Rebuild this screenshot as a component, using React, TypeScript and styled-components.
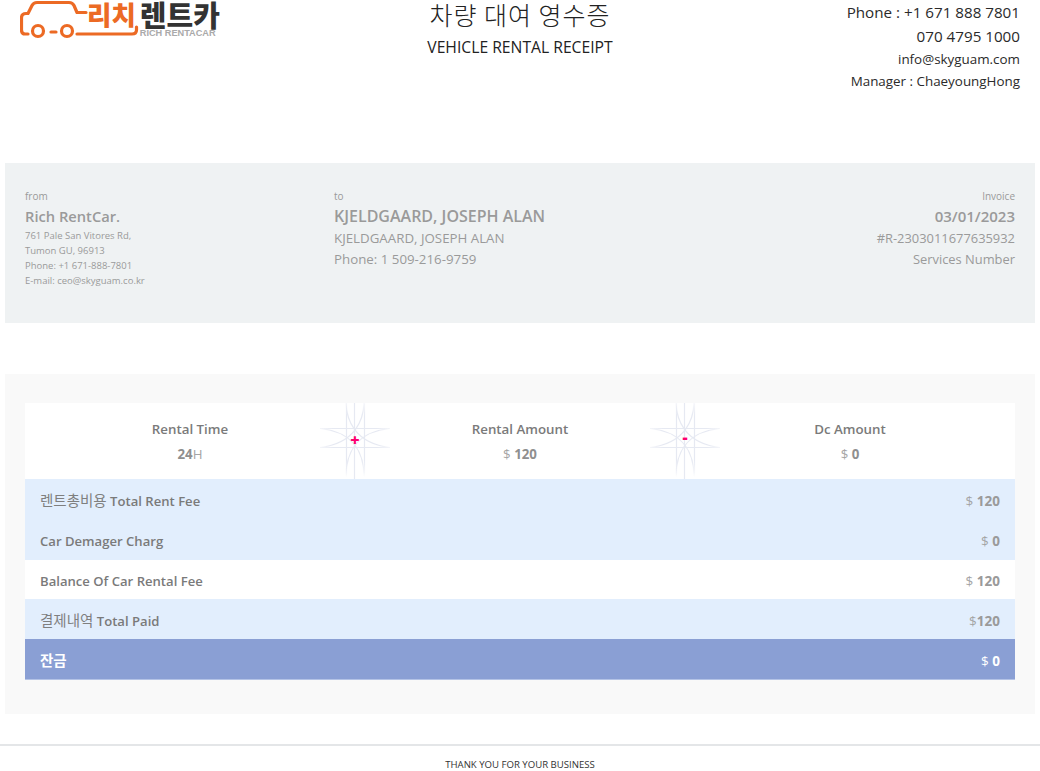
import styled, { createGlobalStyle } from "styled-components";

const Global = createGlobalStyle`
  html, body {
    margin: 0;
    background: #fff;
    font-family: "Open Sans", "Noto Sans CJK KR", sans-serif;
  }
`;

const Page = styled.div`
  width: 1040px;
  height: 771px;
  overflow: hidden;
  display: flex;
  flex-direction: column;
`;

const Header = styled.header`
  height: 163px;
  display: grid;
  grid-template-columns: 1fr 1fr 1fr;
  padding: 0 20px;
  box-sizing: border-box;
`;

const Logo = styled.div`
  display: flex;
  align-items: flex-start;
  height: 40px;
`;

const LogoRed = styled.span`
  font-size: 26.500px;
  font-weight: 900;
  line-height: 28px;
  color: #ec6a24;
  margin-left: -53px;
  font-family: "Noto Sans CJK KR", sans-serif;
`;

const LogoWords = styled.div`
  display: flex;
  flex-direction: column;
  margin-left: 4px;
`;

const LogoDark = styled.span`
  font-size: 29px;
  font-weight: 900;
  line-height: 28px;
  color: #333;
  font-family: "Noto Sans CJK KR", sans-serif;
`;

const LogoSmall = styled.span`
  font-size: 9.200px;
  font-weight: 700;
  line-height: 9px;
  margin-top: 1px;
  color: #aaa;
  font-family: "Liberation Sans", sans-serif;
`;

const Title = styled.div`
  text-align: center;
  color: #222;
`;

const TitleKo = styled.div`
  font-size: 25px;
  line-height: 28px;
  font-weight: 300;
  letter-spacing: 1px;
  font-family: "Noto Sans CJK KR", sans-serif;
`;

const TitleEn = styled.div`
  font-size: 15.700px;
  line-height: 20px;
  margin-top: 9px;
  font-weight: 500;
`;

const Contact = styled.div`
  text-align: right;
  color: #2a2a2a;
`;

const ContactLine = styled.div<{ $strong?: boolean }>`
  font-size: ${(p) => (p.$strong ? "15.200px" : "13.400px")};
  font-weight: ${(p) => (p.$strong ? 500 : 400)};
  line-height: ${(p) => (p.$strong ? "24px" : "22px")};
`;

const InfoPanel = styled.section`
  margin: 0 5px;
  height: 160px;
  box-sizing: border-box;
  padding: 27px 20px 0;
  background: #eff2f3;
  display: grid;
  grid-template-columns: 309px 1fr 1fr;
  color: #9a9a9a;
`;

const InfoBlock = styled.div<{ $right?: boolean }>`
  text-align: ${(p) => (p.$right ? "right" : "left")};
`;

const Tiny = styled.div`
  font-size: 10px;
  line-height: 13px;
`;

const SmallName = styled.div`
  font-size: 14.700px;
  font-weight: 600;
  line-height: 24px;
  margin-top: 1px;
`;

const BigName = styled.div`
  font-size: 15px;
  font-weight: 600;
  line-height: 25px;
  margin: 1px 0 -1px;
`;

const WideName = styled(BigName)`
  font-size: 16px;
`;

const Address = styled.div`
  font-size: 9.500px;
  line-height: 15px;
`;

const Detail = styled.div`
  font-size: 13.300px;
  line-height: 21px;
`;

const RightDetail = styled(Detail)`
  font-size: 12.900px;
`;

const SummaryPanel = styled.section`
  margin: 51px 5px 0;
  height: 340px;
  box-sizing: border-box;
  padding: 29px 20px 0;
  background: #f9f9f9;
`;

const Stats = styled.div`
  display: grid;
  grid-template-columns: 1fr 1fr 1fr;
  height: 76px;
  background: #fff;
`;

const Stat = styled.div`
  position: relative;
  text-align: center;
  padding-top: 16px;
`;

const StatLabel = styled.div`
  font-size: 13.300px;
  font-weight: 600;
  line-height: 20px;
  color: #7a7a7a;
`;

const StatValue = styled.div`
  font-size: 13.300px;
  line-height: 20px;
  margin-top: 5px;
  color: #a5a5a5;
  b {
    font-weight: 700;
    color: #8f8f8f;
  }
`;

const Operator = styled.div`
  position: absolute;
  top: 0;
  right: -35px;
  width: 70px;
  height: 76px;
  display: flex;
  align-items: center;
  justify-content: center;
  z-index: 1;
`;

const OpSign = styled.span<{ $up: number }>`
  position: relative;
  top: ${(p) => -p.$up}px;
  font-size: 16px;
  font-weight: 800;
  line-height: 14px;
  color: #ff0070;
`;

const Star = styled.svg`
  position: absolute;
  inset: 0;
`;

const Row = styled.div<{ $tone: "blue" | "white" | "total"; $h: number; $pad: number }>`
  height: ${(p) => p.$h}px;
  box-sizing: border-box;
  padding: ${(p) => p.$pad}px 15px 0;
  display: flex;
  align-items: center;
  justify-content: space-between;
  font-size: 13.100px;
  line-height: 20px;
  color: ${(p) => (p.$tone === "total" ? "#fff" : "#7a7a7a")};
  background: ${(p) =>
    p.$tone === "blue" ? "#e2eefd" : p.$tone === "total" ? "#8a9fd4" : "#fff"};
  border-bottom: ${(p) => (p.$tone === "total" ? "1px solid #b4c3e6" : "none")};
  b {
    font-weight: 600;
  }
`;

const KoLabel = styled.span<{ $strong?: boolean }>`
  font-size: 14.500px;
  line-height: 1;
  font-weight: ${(p) => (p.$strong ? 700 : 400)};
  color: ${(p) => (p.$strong ? "#fff" : "#7f7f7f")};
`;

const Amount = styled.span<{ $total?: boolean }>`
  font-size: 13.500px;
  color: ${(p) => (p.$total ? "#fff" : "#a5a5a5")};
  b {
    font-weight: 700;
    color: ${(p) => (p.$total ? "#fff" : "#9a9a9a")};
  }
`;

const Footer = styled.footer`
  margin-top: 30px;
  border-top: 2px solid #e4e6e8;
  padding-top: 12px;
  text-align: center;
  font-size: 9.600px;
  line-height: 13px;
  color: #333;
`;

const StarIcon = () => (
  <Star width="70" height="76" viewBox="0 0 70 76" fill="none" strokeWidth="1.200">
    <defs>
      <radialGradient id="fade" gradientUnits="userSpaceOnUse" cx="35" cy="35" r="40">
        <stop offset="0.6" stopColor="#e6e9f2" />
        <stop offset="1" stopColor="#e6e9f2" stopOpacity="0" />
      </radialGradient>
    </defs>
    <path stroke="#e6e9f2" d="M34.500 0V76" />
    <path
      stroke="url(#fade)"
      d="M26.500 -4V76M44.500 -4V76M-4 25.500H74M-4 44.500H74"
    />
    <path
      stroke="url(#fade)"
      d="M26 -2C26 16 34 40 70 44.500M44 -2C44 16 36 40 0 44.500M26 74C26 53 34 29 70 25.500M44 74C44 53 36 29 0 25.500"
    />
  </Star>
);

const App = () => (
  <Page>
    <Global />
    <Header>
      <Logo>
        <svg width="120" height="40" viewBox="0 0 120 40" fill="none" stroke="#ec6a24" strokeWidth="3.200" strokeLinecap="round" strokeLinejoin="round">
          <path d="M8 34H5C2.500 34 1.500 33 1.500 30V18C1.500 15 3 13.500 6 13.500H8L12 5.500C13 3.500 14 2.500 17 2.500H49C52 2.500 53 3.500 54 5.500L57 12.500H66" />
          <circle cx="18" cy="31" r="5.500" />
          <circle cx="47" cy="31" r="5.500" />
          <path d="M31 32H36" />
          <path d="M57 34H112C115 34 116.500 33 116.500 30V27" />
        </svg>
        <LogoRed>리치</LogoRed>
        <LogoWords>
          <LogoDark>렌트카</LogoDark>
          <LogoSmall>RICH RENTACAR</LogoSmall>
        </LogoWords>
      </Logo>
      <Title>
        <TitleKo>차량 대여 영수증</TitleKo>
        <TitleEn>VEHICLE RENTAL RECEIPT</TitleEn>
      </Title>
      <Contact>
        <ContactLine $strong>Phone : +1 671 888 7801</ContactLine>
        <ContactLine $strong>070 4795 1000</ContactLine>
        <ContactLine>info@skyguam.com</ContactLine>
        <ContactLine>Manager : ChaeyoungHong</ContactLine>
      </Contact>
    </Header>
    <InfoPanel>
      <InfoBlock>
        <Tiny>from</Tiny>
        <SmallName>Rich RentCar.</SmallName>
        <Address>761 Pale San Vitores Rd,</Address>
        <Address>Tumon GU, 96913</Address>
        <Address>Phone: +1 671-888-7801</Address>
        <Address>E-mail: ceo@skyguam.co.kr</Address>
      </InfoBlock>
      <InfoBlock>
        <Tiny>to</Tiny>
        <WideName>KJELDGAARD, JOSEPH ALAN</WideName>
        <Detail>KJELDGAARD, JOSEPH ALAN</Detail>
        <Detail>Phone: 1 509-216-9759</Detail>
      </InfoBlock>
      <InfoBlock $right>
        <Tiny>Invoice</Tiny>
        <BigName>03/01/2023</BigName>
        <RightDetail>#R-2303011677635932</RightDetail>
        <RightDetail>Services Number</RightDetail>
      </InfoBlock>
    </InfoPanel>
    <SummaryPanel>
      <Stats>
        <Stat>
          <StatLabel>Rental Time</StatLabel>
          <StatValue><b>24</b>H</StatValue>
          <Operator><StarIcon /><OpSign $up={1}>+</OpSign></Operator>
        </Stat>
        <Stat>
          <StatLabel>Rental Amount</StatLabel>
          <StatValue>$ <b>120</b></StatValue>
          <Operator><StarIcon /><OpSign $up={4}>-</OpSign></Operator>
        </Stat>
        <Stat>
          <StatLabel>Dc Amount</StatLabel>
          <StatValue>$ <b>0</b></StatValue>
        </Stat>
      </Stats>
      <Row $tone="blue" $h={41} $pad={2}>
        <span><KoLabel>렌트총비용</KoLabel> <b>Total Rent Fee</b></span>
        <Amount>$ <b>120</b></Amount>
      </Row>
      <Row $tone="blue" $h={40} $pad={2}>
        <b>Car Demager Charg</b>
        <Amount>$ <b>0</b></Amount>
      </Row>
      <Row $tone="white" $h={39} $pad={2}>
        <b>Balance Of Car Rental Fee</b>
        <Amount>$ <b>120</b></Amount>
      </Row>
      <Row $tone="blue" $h={40} $pad={4}>
        <span><KoLabel>결제내역</KoLabel> <b>Total Paid</b></span>
        <Amount>$<b>120</b></Amount>
      </Row>
      <Row $tone="total" $h={41} $pad={4}>
        <KoLabel $strong>잔금</KoLabel>
        <Amount $total>$ <b>0</b></Amount>
      </Row>
    </SummaryPanel>
    <Footer>THANK YOU FOR YOUR BUSINESS</Footer>
  </Page>
);

export default App;
